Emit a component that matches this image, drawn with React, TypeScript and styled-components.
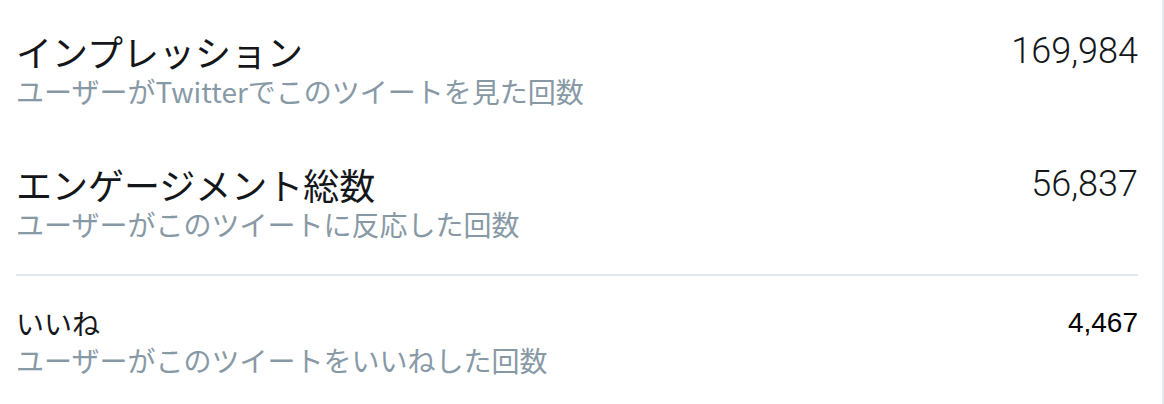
import React from "react";
import styled, { createGlobalStyle } from "styled-components";

const Global = createGlobalStyle`
  html, body { margin: 0; padding: 0; background: #ffffff; }
  body { font-family: "Noto Sans CJK JP", "Noto Sans", sans-serif; }
`;

const Panel = styled.div`
  box-sizing: border-box;
  width: 1164px;
  height: 404px;
  padding: 3px 24px 0 16px;
  border-right: 2px solid #e6ecf0;
  overflow: hidden;
`;

const Row = styled.div<{ $top: number; $bottom: number }>`
  display: flex;
  justify-content: space-between;
  align-items: flex-start;
  padding: ${(p) => p.$top}px 0 ${(p) => p.$bottom}px;
`;

const Texts = styled.div`
  display: flex;
  flex-direction: column;
`;

const Title = styled.div<{ $small?: boolean }>`
  font-family: "Noto Sans CJK JP", sans-serif;
  font-size: ${(p) => (p.$small ? 28 : 36)}px;
  line-height: ${(p) => (p.$small ? 38 : 44)}px;
  color: #14171a;
  font-weight: 400;
`;

const Sub = styled.div`
  font-family: "Noto Sans CJK JP", sans-serif;
  font-size: 28px;
  line-height: 36px;
  color: #8899a6;
`;

const Value = styled.div<{ $small?: boolean }>`
  font-family: ${(p) => (p.$small ? '"Liberation Sans", Arial, sans-serif' : 'Roboto, "Liberation Sans", sans-serif')};
  font-weight: ${(p) => (p.$small ? 400 : 300)};
  font-size: ${(p) => (p.$small ? 28 : 36)}px;
  line-height: ${(p) => (p.$small ? 38 : 44)}px;
  color: ${(p) => (p.$small ? "#000000" : "#14171a")};
`;

const Divider = styled.hr`
  margin: 5px 0 0;
  border: none;
  height: 2px;
  background: #e1e8ed;
`;

export default function App() {
  return (
    <>
      <Global />
      <Panel>
        <Row $top={26} $bottom={27}>
          <Texts>
            <Title>インプレッション</Title>
            <Sub>ユーザーがTwitterでこのツイートを見た回数</Sub>
          </Texts>
          <Value>169,984</Value>
        </Row>
        <Row $top={26} $bottom={27}>
          <Texts>
            <Title>エンゲージメント総数</Title>
            <Sub>ユーザーがこのツイートに反応した回数</Sub>
          </Texts>
          <Value>56,837</Value>
        </Row>
        <Divider />
        <Row $top={28} $bottom={20}>
          <Texts>
            <Title $small>いいね</Title>
            <Sub>ユーザーがこのツイートをいいねした回数</Sub>
          </Texts>
          <Value $small>4,467</Value>
        </Row>
      </Panel>
    </>
  );
}
